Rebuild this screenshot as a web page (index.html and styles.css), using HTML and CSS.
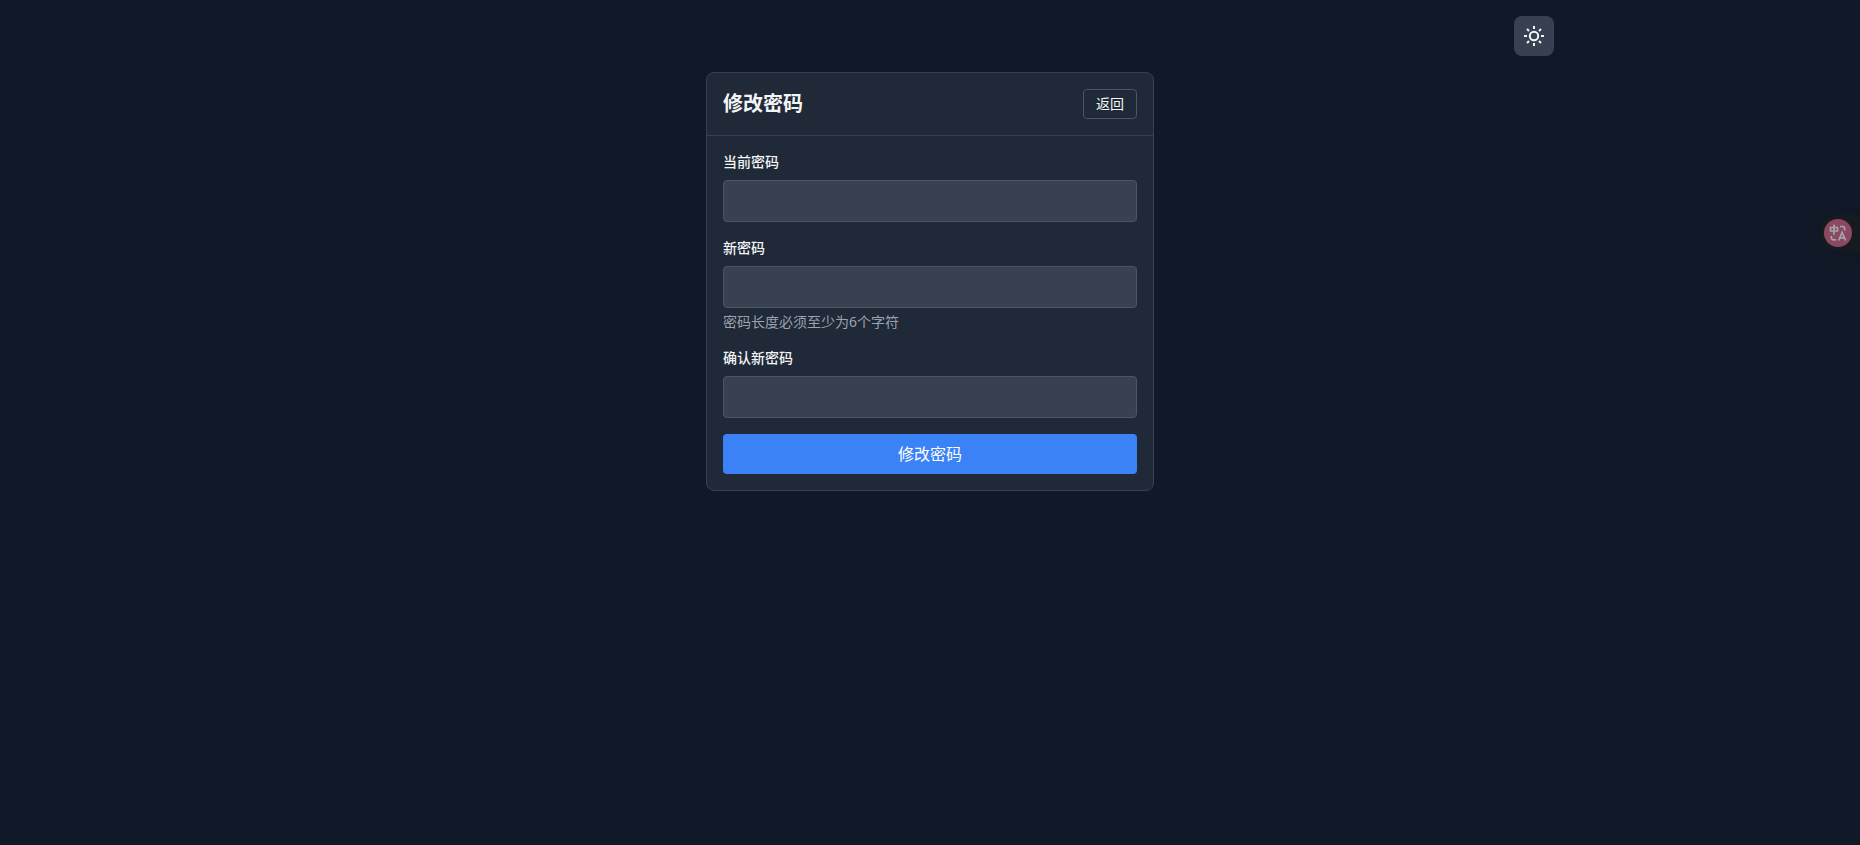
FILE: index.html
```html
<!DOCTYPE html>
<html lang="zh-CN">
<head>
  <meta charset="utf-8">
  <title>修改密码</title>
  <meta name="viewport" content="width=device-width, initial-scale=1.0">
  <link rel="stylesheet" href="styles.css">
</head>
<body>
  <div class="container">
    <div class="toolbar">
      <button type="button" class="theme-btn" aria-label="切换主题">
        <svg width="20" height="20" viewBox="0 0 20 20" fill="none" stroke="currentColor" stroke-width="2">
          <circle cx="10" cy="10" r="4.200"/>
          <path d="M10 0v3M10 17v3M0 10h3M17 10h3M3 3l2 2M15 15l2 2M3 17l2-2M15 5l2-2"/>
        </svg>
      </button>
    </div>

    <main class="card">
      <div class="card-header">
        <h1>修改密码</h1>
        <a class="back-btn" href="#">返回</a>
      </div>

      <form class="card-body">
        <div class="field">
          <label for="currentPassword">当前密码</label>
          <input type="password" id="currentPassword" name="currentPassword" required>
        </div>

        <div class="field">
          <label for="newPassword">新密码</label>
          <input type="password" id="newPassword" name="newPassword" minlength="6" required>
          <p class="hint">密码长度必须至少为6个字符</p>
        </div>

        <div class="field">
          <label for="confirmPassword">确认新密码</label>
          <input type="password" id="confirmPassword" name="confirmPassword" minlength="6" required>
        </div>

        <button type="submit" class="submit-btn">修改密码</button>
      </form>
    </main>
  </div>

  <div class="translate-tab">
    <button type="button" class="translate-btn" aria-label="翻译">
      <svg width="28" height="28" viewBox="0 0 28 28" fill="none" stroke="currentColor" stroke-width="1.7">
        <path d="M6.500 8.500h7v3.500h-7zM10 5.500v10.200"/>
        <path d="M16 7.500h2.500a2.200 2.200 0 0 1 2.200 2.200v1.700M7.300 17v1.600a2.200 2.200 0 0 0 2.200 2.200h2.700"/>
        <path d="M14.600 21.500l3.500-8.200 3.500 8.200M15.600 18.900h5"/>
      </svg>
    </button>
  </div>
</body>
</html>
```
FILE: styles.css
```css
* {
  box-sizing: border-box;
}

body {
  margin: 0;
  min-height: 100vh;
  background-color: #111827;
  color: #f3f4f6;
  font-family: "Noto Sans", "Noto Sans CJK SC", sans-serif;
  font-size: 16px;
  line-height: 24px;
}

h1, p {
  margin: 0;
}

.container {
  max-width: 1280px;
  margin: 0 auto;
  padding: 16px;
}

.toolbar {
  display: flex;
  justify-content: flex-end;
  margin-bottom: 16px;
}

.theme-btn {
  display: flex;
  padding: 10px;
  border: none;
  border-radius: 8px;
  background-color: #374151;
  color: #f3f4f6;
  cursor: pointer;
}

.card {
  max-width: 448px;
  margin: 0 auto;
  background-color: #1f2937;
  border: 1px solid #374151;
  border-radius: 8px;
}

.card-header {
  display: flex;
  justify-content: space-between;
  align-items: center;
  padding: 16px;
  border-bottom: 1px solid #374151;
}

h1 {
  font-size: 20px;
  line-height: 28px;
  font-weight: 700;
}

.back-btn {
  padding: 4px 12px;
  border: 1px solid #4b5563;
  border-radius: 4px;
  color: #f3f4f6;
  font-size: 14px;
  line-height: 20px;
  text-decoration: none;
}

.card-body {
  padding: 16px;
}

.field {
  margin-bottom: 16px;
}

label {
  display: block;
  margin-bottom: 8px;
  font-size: 14px;
  line-height: 20px;
  font-weight: 500;
}

input {
  display: block;
  width: 100%;
  height: 42px;
  padding: 8px 12px;
  background-color: #374151;
  color: #f3f4f6;
  border: 1px solid #4b5563;
  border-radius: 4px;
  font-family: inherit;
  font-size: 16px;
  line-height: 24px;
}

.hint {
  margin-top: 4px;
  color: #9ca3af;
  font-size: 14px;
  line-height: 20px;
}

.submit-btn {
  display: block;
  width: 100%;
  padding: 8px 16px;
  border: none;
  border-radius: 4px;
  background-color: #3b82f6;
  color: #fff;
  font-family: inherit;
  font-size: 16px;
  line-height: 24px;
  cursor: pointer;
}

.submit-btn:hover {
  background-color: #2563eb;
}

/* floating translate button */
.translate-tab {
  position: fixed;
  top: 215px;
  right: 0;
  padding: 4px 8px 4px 4px;
  border-radius: 18px 0 0 18px;
  background-color: #161b20;
  box-shadow: 0 2px 8px rgba(20, 24, 30, 0.5);
}

.translate-btn {
  display: flex;
  padding: 0;
  border: none;
  border-radius: 50%;
  background-color: #8b4862;
  color: #a5a5a9;
  cursor: pointer;
}
```
